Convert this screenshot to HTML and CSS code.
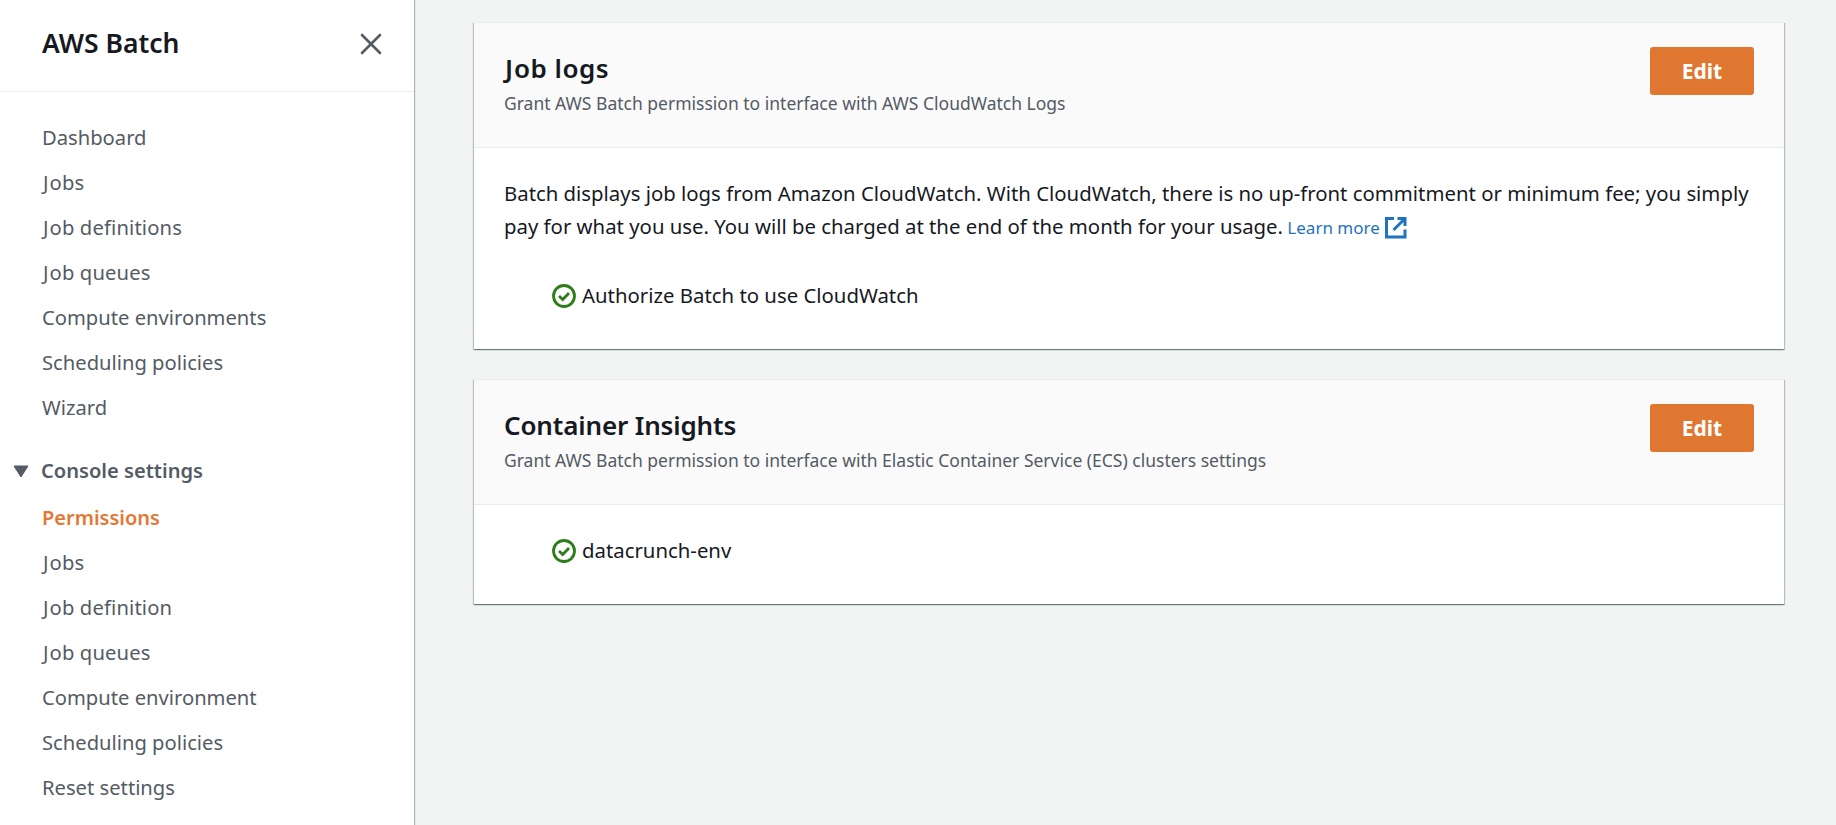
FILE: index.html
```html
<!DOCTYPE html>
<html lang="en">
<head>
<meta charset="utf-8">
<title>AWS Batch</title>
<link rel="stylesheet" href="styles.css">
</head>
<body>
<div class="app">
  <aside class="sidebar">
    <header class="sidebar-header">
      <h2 class="sidebar-title">AWS Batch</h2>
      <svg class="close" width="22" height="22" viewBox="0 0 22 22"><path d="M2 2l18 18M20 2L2 20"/></svg>
    </header>
    <nav class="nav">
      <a class="nav-item">Dashboard</a>
      <a class="nav-item lead-j">Jobs</a>
      <a class="nav-item lead-j">Job definitions</a>
      <a class="nav-item lead-j">Job queues</a>
      <a class="nav-item">Compute environments</a>
      <a class="nav-item">Scheduling policies</a>
      <a class="nav-item">Wizard</a>
      <div class="nav-section">
        <svg class="caret" width="16" height="13" viewBox="0 0 16 13"><path d="M1 1h14L8 12z"/></svg>
        <span>Console settings</span>
      </div>
      <a class="nav-item active">Permissions</a>
      <a class="nav-item lead-j">Jobs</a>
      <a class="nav-item lead-j">Job definition</a>
      <a class="nav-item lead-j">Job queues</a>
      <a class="nav-item">Compute environment</a>
      <a class="nav-item">Scheduling policies</a>
      <a class="nav-item">Reset settings</a>
    </nav>
  </aside>
  <main class="content">
    <section class="card">
      <header class="card-header">
        <div>
          <h2 class="card-title lead-j">Job logs</h2>
          <p class="card-desc">Grant AWS Batch permission to interface with AWS CloudWatch Logs</p>
        </div>
        <button class="edit">Edit</button>
      </header>
      <div class="card-body">
        <p class="text">Batch displays job logs from Amazon CloudWatch. With CloudWatch, there is no up-front commitment or minimum fee; you simply<br>pay for what you use. You will be charged at the end of the month for your usage. <a class="learn">Learn more<svg class="external" width="24" height="24" viewBox="0 0 24 24"><path d="M10 3H2.5v18.5H21V14"/><path d="M13.5 3H21v7.5M21 3L9.5 14.5"/></svg></a></p>
        <div class="status spaced">
          <svg class="check" width="24" height="24" viewBox="0 0 24 24"><circle cx="12" cy="12" r="10.5"/><path d="M7 12l3.7 3.5L17 9"/></svg>
          <span>Authorize Batch to use CloudWatch</span>
        </div>
      </div>
    </section>
    <section class="card">
      <header class="card-header">
        <div>
          <h2 class="card-title tight">Container Insights</h2>
          <p class="card-desc">Grant AWS Batch permission to interface with Elastic Container Service (ECS) clusters settings</p>
        </div>
        <button class="edit">Edit</button>
      </header>
      <div class="card-body">
        <div class="status">
          <svg class="check" width="24" height="24" viewBox="0 0 24 24"><circle cx="12" cy="12" r="10.5"/><path d="M7 12l3.7 3.5L17 9"/></svg>
          <span>datacrunch-env</span>
        </div>
      </div>
    </section>
  </main>
</div>
</body>
</html>
```
FILE: styles.css
```css
* { box-sizing: border-box; }
body {
  margin: 0;
  background: #f2f3f3;
  color: #16191f;
  font-family: "Noto Sans", sans-serif;
  font-size: 20.35px;
}
h2, p { margin: 0; }
.app { display: flex; height: 825px; overflow: hidden; }

.sidebar {
  width: 414px;
  flex: none;
  background: #fff;
  box-shadow: 1px 0 1px 0 #aab7b8;
  color: #545b64;
}
.sidebar-header {
  height: 92px;
  padding: 0 32px 4px 42px;
  display: flex;
  align-items: center;
  justify-content: space-between;
  border-bottom: 1px solid #eaeded;
}
.sidebar-title { font-size: 26.5px; line-height: 36px; font-weight: 600; color: #16191f; padding-bottom: 1px; }
.close { fill: none; stroke: #545b64; stroke-width: 2.6; stroke-linecap: round; }
.nav { display: flex; flex-direction: column; padding-top: 23px; font-size: 20.2px; }
.nav-item { height: 45px; line-height: 45px; padding-left: 42px; white-space: nowrap; }
.nav-item.lead-j { padding-left: 43px; letter-spacing: .15px; }
.lead-j::first-letter { letter-spacing: 1px; }
.nav-item.active { color: #e47734; font-weight: 600; font-size: 20px; }
.nav-section {
  height: 46px;
  margin: 17px 0 2px;
  padding-left: 13px;
  display: flex;
  align-items: center;
  gap: 12px;
  font-size: 20.1px;
  font-weight: 600;
}
.caret { margin-top: 3px; fill: #545b64; stroke: #545b64; stroke-linejoin: round; }

.content {
  flex: 1;
  padding: 22px 52px 0 60px;
  display: flex;
  flex-direction: column;
  gap: 30px;
}
.card {
  background: #fff;
  border-top: 1px solid #eaeded;
  box-shadow: 0 1px 1px 0 rgba(0, 28, 36, .3), 1px 1px 1px 0 rgba(0, 28, 36, .2), -1px 1px 1px 0 rgba(0, 28, 36, .2);
}
.card-header {
  height: 125px;
  padding: 24px 30px 0;
  display: flex;
  justify-content: space-between;
  align-items: flex-start;
  background: #fafafa;
  border-bottom: 1px solid #eaeded;
}
.card-title { font-size: 26px; line-height: 36px; font-weight: 600; padding: 3px 0 1px; }
.card-title.lead-j { padding-left: 1px; letter-spacing: .5px; }
.card-title.tight { letter-spacing: -.15px; }
.card-desc { font-size: 17.5px; line-height: 33px; color: #545b64; white-space: nowrap; }
.edit {
  width: 104px;
  height: 48px;
  padding: 0;
  border: 0;
  border-radius: 3px;
  background: #e07730;
  color: #fff;
  font: 700 21px/47px "Noto Sans", sans-serif;
}
.card-body { padding: 29px 30px 37px; }
.text { line-height: 33px; white-space: nowrap; }
.learn { margin-left: -1px; font-size: 17px; line-height: 20px; color: #1f74bd; }
.external { margin: -6px 0 -6px 4px; vertical-align: 0; transform: translateY(-.5px); fill: none; stroke: #1f74bd; stroke-width: 3; }
.status { display: flex; align-items: center; gap: 6px; height: 33px; line-height: 33px; padding-left: 48px; }
.status span { padding-bottom: 1px; }
.status.spaced { margin-top: 36px; }
.check { fill: none; stroke: #2f7d1a; stroke-width: 2.8; }
```
